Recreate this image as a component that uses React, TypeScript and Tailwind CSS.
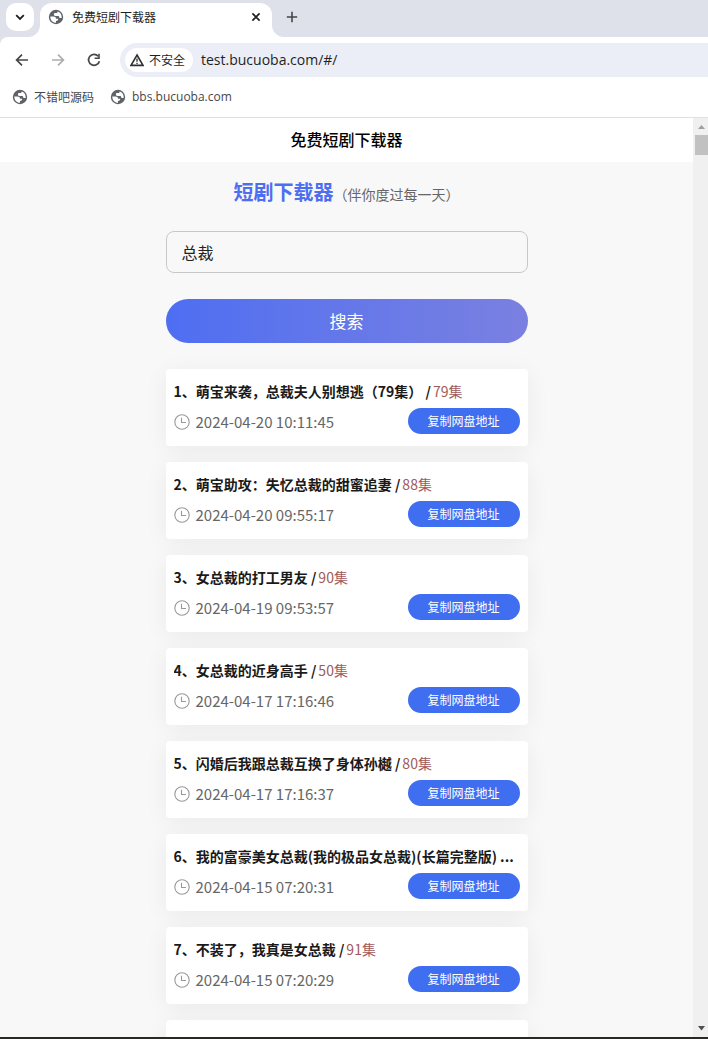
import React from "react";

type Drama = { title: string; count?: string; time: string };

const dramas: Drama[] = [
  { title: "1、萌宝来袭，总裁夫人别想逃（79集） /", count: "79集", time: "2024-04-20 10:11:45" },
  { title: "2、萌宝助攻：失忆总裁的甜蜜追妻 /", count: "88集", time: "2024-04-20 09:55:17" },
  { title: "3、女总裁的打工男友 /", count: "90集", time: "2024-04-19 09:53:57" },
  { title: "4、女总裁的近身高手 /", count: "50集", time: "2024-04-17 17:16:46" },
  { title: "5、闪婚后我跟总裁互换了身体孙樾 /", count: "80集", time: "2024-04-17 17:16:37" },
  { title: "6、我的富豪美女总裁(我的极品女总裁)(长篇完整版) ...", time: "2024-04-15 07:20:31" },
  { title: "7、不装了，我真是女总裁 /", count: "91集", time: "2024-04-15 07:20:29" },
];

function Globe() {
  return (
    <svg viewBox="0 0 16 16" className="size-4 shrink-0" aria-hidden="true">
      <circle cx="8" cy="8" r="7.2" fill="#5f6368" />
      <path
        d="M2.3 7.4H5.4C7.2 7.4 8 8.2 8 9.8H10.2C10.2 11.4 9.4 12 8 12V13.7C4.8 13.7 2.2 11.2 2.3 7.4Z"
        fill="#fff"
      />
      <path
        d="M9.6 2.5C12.2 3.2 13.7 5.4 13.7 8C13.7 8.3 13.7 8.6 13.6 8.9H12.2C11.3 8.9 10.9 8.4 10.9 7.6V6.9H7.4C6.4 6.9 5.9 6.3 5.9 5.5C5.9 4.6 6.4 4.1 7.3 4.1H8.1C9.1 4.1 9.6 3.6 9.6 2.5Z"
        fill="#fff"
      />
    </svg>
  );
}

function Clock() {
  return (
    <svg viewBox="0 0 16 16" className="size-4 shrink-0" fill="none" stroke="#999" aria-hidden="true">
      <circle cx="8" cy="8" r="7.2" strokeWidth="1.1" />
      <path d="M7.5 3.8V8.5H12" strokeWidth="1.1" />
    </svg>
  );
}

function TabStrip() {
  return (
    <div className="flex h-[37px] shrink-0 items-stretch bg-[#dee1ea]">
      <div className="flex w-10 items-stretch bg-white">
        <div className="flex flex-1 items-start rounded-br-xl bg-[#dee1ea] pt-[3px] pl-[6px]">
          <button aria-label="搜索标签页" className="flex size-7 items-center justify-center rounded-[10px] bg-white">
            <svg viewBox="0 0 10 10" className="size-[10px]" fill="none" stroke="#1f1f1f" strokeWidth="1.8" aria-hidden="true">
              <path d="M1.2 3.2L5 7L8.8 3.2" />
            </svg>
          </button>
        </div>
      </div>
      <div className="flex w-[232px] bg-[#dee1ea] pt-[3px]">
        <div className="flex flex-1 items-center rounded-t-xl bg-white pr-[10px] pb-[6px] pl-2">
          <Globe />
          <span className="ml-2 flex-1 text-[12px] text-[#1f1f1f]">免费短剧下载器</span>
          <button aria-label="关闭" className="flex size-3 items-center justify-center">
            <svg viewBox="0 0 10 10" className="size-[10px]" stroke="#1f1f1f" strokeWidth="1.6" aria-hidden="true">
              <path d="M1.4 1.4L8.6 8.6M8.6 1.4L1.4 8.6" />
            </svg>
          </button>
        </div>
      </div>
      <div className="flex-1 bg-white">
        <div className="flex h-full items-center rounded-bl-xl bg-[#dee1ea] pb-[3px] pl-[14px]">
          <button aria-label="新标签页" className="size-3">
            <svg viewBox="0 0 12 12" className="size-3" stroke="#444746" strokeWidth="1.6" aria-hidden="true">
              <path d="M6 0.8V11.2M0.8 6H11.2" />
            </svg>
          </button>
        </div>
      </div>
    </div>
  );
}

function Arrow({ color, flip }: { color: string; flip?: boolean }) {
  return (
    <svg viewBox="0 0 14 14" className="size-[14px]" fill="none" stroke={color} strokeWidth="1.7" aria-hidden="true">
      <path d={flip ? "M1 7H12M7 1.6L12.4 7L7 12.4" : "M13 7H2M7 1.6L1.6 7L7 12.4"} />
    </svg>
  );
}

function Toolbar() {
  return (
    <div className="flex shrink-0 items-center rounded-tl-lg bg-white py-[6px] pl-[15px]">
      <button aria-label="后退" className="mr-[22px]">
        <Arrow color="#444746" />
      </button>
      <button aria-label="前进" className="mr-[22px]">
        <Arrow color="#acaead" flip />
      </button>
      <button aria-label="重新加载" className="mr-[19px]">
        <svg viewBox="0 0 14 14" className="size-[14px]" aria-hidden="true">
          <path d="M11.2 3.2A5.5 5.5 0 1 0 12.4 8.2" fill="none" stroke="#444746" strokeWidth="1.7" />
          <path d="M12.8 0.8V6H7.6V4.4H11.2V0.8Z" fill="#444746" />
        </svg>
      </button>
      <div className="flex h-[34px] flex-1 items-center rounded-l-full bg-[#ebeef7] pl-[5px]">
        <button className="flex h-6 items-center rounded-full bg-white pr-2 pl-[5px] text-[12px] text-[#1f1f1f]">
          <svg viewBox="0 0 14 14" className="mr-[5px] size-[14px]" fill="none" stroke="#303030" aria-hidden="true">
            <path d="M7 2L13 12.4H1Z" strokeWidth="1.6" />
            <path d="M7 5.4V8.8M7 9.8V11" strokeWidth="1.3" />
          </svg>
          不安全
        </button>
        <input
          aria-label="地址"
          defaultValue="test.bucuoba.com/#/"
          className="ml-2 h-6 min-w-0 flex-1 bg-transparent pb-[2px] font-['Open_Sans','Noto_Sans_CJK_SC',sans-serif] text-[14px] text-[#1f1f1f] outline-none"
        />
      </div>
    </div>
  );
}

function Bookmarks() {
  return (
    <nav className="flex h-[35px] shrink-0 items-center gap-4 border-b border-[#dfe0e2] bg-white pb-[6px] pl-3 text-[12px] text-[#474747]">
      <a href="#" className="flex items-center gap-[6px]">
        <Globe />
        不错吧源码
      </a>
      <a href="#" className="flex items-center gap-[6px] font-['Open_Sans',sans-serif]">
        <Globe />
        bbs.bucuoba.com
      </a>
    </nav>
  );
}

function DramaCard({ drama }: { drama: Drama }) {
  return (
    <li className="flex flex-col rounded bg-white px-2 py-3 shadow-[0_4px_24px_rgba(0,0,0,0.06)]">
      <h2 className="truncate text-[14px] leading-5 font-bold text-[#1a1a1a]">
        {drama.title}
        <span className="ml-[2px] font-normal text-[#a05a5a]">{drama.count}</span>
      </h2>
      <div className="mt-[7px] flex h-[26px] items-center justify-between">
        <time className="flex items-center gap-[6px] pt-[2px] text-[15px] leading-5 text-[#666]">
          <Clock />
          {drama.time}
        </time>
        <button className="h-[26px] w-28 rounded-full bg-[#3f6ef0] text-[12px] text-white">复制网盘地址</button>
      </div>
    </li>
  );
}

function ScrollBar() {
  return (
    <div className="flex w-[15px] shrink-0 flex-col items-end bg-[#f0f0f0]" aria-hidden="true">
      <svg viewBox="0 0 15 17" className="h-[17px] w-[15px]">
        <path d="M5 11L8.5 7L12 11Z" fill="#a0a0a0" />
      </svg>
      <div className="h-5 w-[13px] bg-[#c1c1c1]" />
      <div className="flex-1" />
      <svg viewBox="0 0 15 17" className="h-[17px] w-[15px]">
        <path d="M5 6H12L8.5 10.5Z" fill="#505050" />
      </svg>
    </div>
  );
}

export default function App() {
  return (
    <div className="flex h-screen flex-col overflow-hidden bg-[#f8f8f8] font-['Noto_Sans_CJK_SC',sans-serif]">
      <TabStrip />
      <div className="shrink-0 bg-[#dee1ea]">
        <Toolbar />
      </div>
      <Bookmarks />
      <div className="flex min-h-0 flex-1">
        <main className="flex-1 overflow-hidden">
          <header className="flex h-11 items-center justify-center bg-white pb-[2px] text-[16px] font-medium text-black">
            免费短剧下载器
          </header>
          <div className="mx-auto max-w-[362px]">
            <h1 className="flex items-baseline justify-center pt-[15px] text-[20px] leading-[30px] font-bold text-[#4e6ef2]">
              短剧下载器
              <small className="text-[14px] leading-5 font-normal text-[#666]">（伴你度过每一天）</small>
            </h1>
            <input
              aria-label="短剧名称"
              defaultValue="总裁"
              className="mt-6 h-[42px] w-full rounded-lg border border-[#c8c8cc] bg-transparent px-[15px] text-[16px] text-[#222] outline-none"
            />
            <button className="mt-[26px] h-11 w-full rounded-full bg-linear-to-r from-[#4e6ef2] to-[#7a80e0] text-[17px] text-white">
              搜索
            </button>
            <ul className="mt-[26px] flex flex-col gap-4">
              {dramas.map((drama) => (
                <DramaCard key={drama.title} drama={drama} />
              ))}
              <li className="h-[77px] rounded bg-white shadow-[0_4px_24px_rgba(0,0,0,0.06)]" />
            </ul>
          </div>
        </main>
        <ScrollBar />
      </div>
      <div className="h-[2px] shrink-0 bg-[#262a22]" />
    </div>
  );
}
